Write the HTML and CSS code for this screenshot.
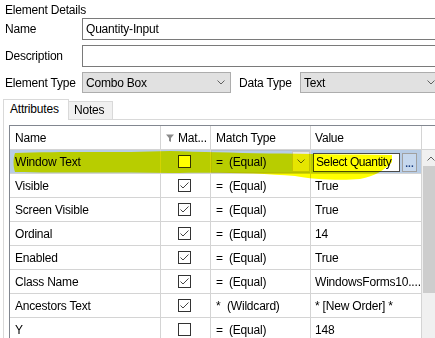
FILE: index.html
```html
<!DOCTYPE html>
<html>
<head>
  <title>Element Details</title>
  <link rel="stylesheet" href="styles.css">
</head>
<body>
  <div class="title">Element Details</div>
  <div class="form">
    <label>Name</label>
    <div class="textbox">Quantity-Input</div>
    <label>Description</label>
    <div class="textbox"></div>
    <label>Element Type</label>
    <div class="type-row">
      <div class="combo combo-type">Combo Box
        <svg width="8" height="5"><path d="M0.5 0.5 L4 4 L7.5 0.5" fill="none" stroke="#606060"/></svg>
      </div>
      <label class="data-label">Data Type</label>
      <div class="combo combo-data">Text
        <svg width="8" height="5"><path d="M0.5 0.5 L4 4 L7.5 0.5" fill="none" stroke="#606060"/></svg>
      </div>
    </div>
  </div>

  <div class="tabs">
    <div class="tab active">Attributes</div>
    <div class="tab notes">Notes</div>
  </div>

  <div class="panel">
    <div class="grid">
      <div class="row head">
        <div class="cell c-name">Name</div>
        <div class="cell c-mat head-mat">
          <svg class="funnel" width="8" height="8"><path d="M0 0.5 H8 L5 4 V8 L3 7 V4 Z" fill="#8a8a8a"/></svg>
          Mat...
        </div>
        <div class="cell c-type">Match Type</div>
        <div class="cell c-val">Value</div>
        <div class="cell c-fill"></div>
      </div>

      <div class="body">
        <div class="rows">
          <div class="row sel">
            <div class="cell c-name">Window Text</div>
            <div class="cell c-mat">
              <svg width="13" height="13"><rect x="0.5" y="0.5" width="12" height="12" fill="#fff" stroke="#333"/></svg>
            </div>
            <div class="cell c-type edit">
              <div class="cell-combo">
                <span class="op">=</span>(Equal)
                <div class="drop">
                  <svg width="8" height="5"><path d="M0.5 0.5 L4 4 L7.5 0.5" fill="none" stroke="#606060"/></svg>
                </div>
              </div>
            </div>
            <div class="cell c-val edit">
              <div class="cell-text">Select Quantity</div>
              <div class="dots">...</div>
            </div>
          </div>

          <div class="row">
            <div class="cell c-name">Visible</div>
            <div class="cell c-mat"><svg width="13" height="13"><rect x="0.5" y="0.5" width="12" height="12" fill="#fff" stroke="#333"/><polyline points="2.5,6.5 5,9 10.5,3.5" fill="none" stroke="#444"/></svg></div>
            <div class="cell c-type"><span class="op">=</span>(Equal)</div>
            <div class="cell c-val">True</div>
          </div>
          <div class="row">
            <div class="cell c-name">Screen Visible</div>
            <div class="cell c-mat"><svg width="13" height="13"><rect x="0.5" y="0.5" width="12" height="12" fill="#fff" stroke="#333"/><polyline points="2.5,6.5 5,9 10.5,3.5" fill="none" stroke="#444"/></svg></div>
            <div class="cell c-type"><span class="op">=</span>(Equal)</div>
            <div class="cell c-val">True</div>
          </div>
          <div class="row">
            <div class="cell c-name">Ordinal</div>
            <div class="cell c-mat"><svg width="13" height="13"><rect x="0.5" y="0.5" width="12" height="12" fill="#fff" stroke="#333"/><polyline points="2.5,6.5 5,9 10.5,3.5" fill="none" stroke="#444"/></svg></div>
            <div class="cell c-type"><span class="op">=</span>(Equal)</div>
            <div class="cell c-val">14</div>
          </div>
          <div class="row">
            <div class="cell c-name">Enabled</div>
            <div class="cell c-mat"><svg width="13" height="13"><rect x="0.5" y="0.5" width="12" height="12" fill="#fff" stroke="#333"/><polyline points="2.5,6.5 5,9 10.5,3.5" fill="none" stroke="#444"/></svg></div>
            <div class="cell c-type"><span class="op">=</span>(Equal)</div>
            <div class="cell c-val">True</div>
          </div>
          <div class="row">
            <div class="cell c-name">Class Name</div>
            <div class="cell c-mat"><svg width="13" height="13"><rect x="0.5" y="0.5" width="12" height="12" fill="#fff" stroke="#333"/><polyline points="2.5,6.5 5,9 10.5,3.5" fill="none" stroke="#444"/></svg></div>
            <div class="cell c-type"><span class="op">=</span>(Equal)</div>
            <div class="cell c-val">WindowsForms10....</div>
          </div>
          <div class="row">
            <div class="cell c-name">Ancestors Text</div>
            <div class="cell c-mat"><svg width="13" height="13"><rect x="0.5" y="0.5" width="12" height="12" fill="#fff" stroke="#333"/><polyline points="2.5,6.5 5,9 10.5,3.5" fill="none" stroke="#444"/></svg></div>
            <div class="cell c-type"><span class="op wild">*</span>(Wildcard)</div>
            <div class="cell c-val">* [New Order] *</div>
          </div>
          <div class="row">
            <div class="cell c-name">Y</div>
            <div class="cell c-mat"><svg width="13" height="13"><rect x="0.5" y="0.5" width="12" height="12" fill="#fff" stroke="#333"/></svg></div>
            <div class="cell c-type"><span class="op">=</span>(Equal)</div>
            <div class="cell c-val">148</div>
          </div>
        </div>

        <div class="scrollbar">
          <div class="scroll-up">
            <svg width="8" height="5"><path d="M0.5 4.5 L4 1 L7.5 4.5" fill="none" stroke="#606060"/></svg>
          </div>
          <div class="thumb"></div>
        </div>
      </div>
    </div>
  </div>

  <!-- highlighter stroke drawn over the selected row -->
  <svg class="marker" width="435" height="338">
    <path d="M15 153 C60 151 120 153 170 151 C230 153 300 154 392 155 L392 162 C385 170 375 176 360 179 C340 181 310 179 295 176 C260 173 220 172 170 173 C120 172 60 173 15 172 C13 166 13 159 15 153 Z" fill="#ffff00"/>
  </svg>
</body>
</html>
```

FILE: styles.css
```css
body {
  margin: 0;
  width: 435px;
  height: 338px;
  overflow: hidden;
  background: #fff;
  color: #000;
  font-family: "Liberation Sans", Arial, sans-serif;
  font-size: 12px;
  letter-spacing: -0.2px;
}
.title {
  padding: 3px 0 0 5px;
  height: 15px;
  line-height: 15px;
}
.form {
  display: grid;
  grid-template-columns: 77px 420px;
  grid-template-rows: 22px 22px 21px;
  row-gap: 5px;
  align-items: center;
  padding-left: 5px;
}
.textbox {
  height: 22px;
  box-sizing: border-box;
  border: 1px solid #7a7a7a;
  padding-left: 3px;
  line-height: 20px;
}
.type-row {
  display: flex;
  align-items: center;
  height: 21px;
}
.combo {
  height: 21px;
  box-sizing: border-box;
  border: 1px solid #adadad;
  background: #e1e1e1;
  padding: 0 5px 0 3px;
  display: flex;
  justify-content: space-between;
  align-items: center;
}
.combo-type {
  width: 149px;
}
.data-label {
  margin-left: 8px;
  width: 61px;
}
.combo-data {
  width: 141px;
}
.tabs {
  display: flex;
  align-items: flex-end;
  height: 20px;
  margin-top: 6px;
  padding-left: 3px;
}
.tab {
  box-sizing: border-box;
  height: 18px;
  border: 1px solid #d9d9d9;
  border-bottom: none;
  background: #f0f0f0;
  padding-left: 5px;
  line-height: 17px;
}
.tab.active {
  width: 66px;
  height: 21px;
  margin-bottom: -1px;
  padding-left: 6px;
  line-height: 18px;
  background: #fff;
  position: relative;
  z-index: 1;
}
.tab.notes {
  width: 45px;
  margin-left: -1px;
}
.panel {
  margin-left: 3px;
  border-left: 1px solid #d9d9d9;
  border-top: 1px solid #d9d9d9;
  padding: 5px 0 0 5px;
}
.grid {
  width: 440px;
  border-left: 1px solid #828790;
  border-top: 1px solid #828790;
}
.row {
  display: flex;
  height: 24px;
  box-sizing: border-box;
  border-bottom: 1px solid #d4d4d4;
}
.cell {
  box-sizing: border-box;
  border-right: 1px solid #d4d4d4;
  display: flex;
  align-items: center;
  white-space: nowrap;
  overflow: hidden;
}
.c-name {
  width: 151px;
  padding-left: 5px;
}
.c-mat {
  width: 50px;
  padding-left: 17px;
}
.head-mat {
  padding-left: 5px;
}
.funnel {
  margin-right: 4px;
}
.c-type {
  width: 100px;
  padding-left: 5px;
}
.c-val {
  width: 111px;
  padding-left: 4px;
}
.c-fill {
  width: 17px;
  border-right: none;
}
.op {
  display: inline-block;
  width: 13px;
}
.op.wild {
  width: 11px;
}
.body {
  display: flex;
}
.rows {
  width: 412px;
}
.row.sel .cell {
  background: #b8cde6;
}
.c-type.edit {
  padding: 0;
}
.cell-combo {
  flex: 1;
  height: 23px;
  box-sizing: border-box;
  border: 1px solid #b4bfcc;
  border-right: none;
  padding-left: 4px;
  display: flex;
  align-items: center;
}
.drop {
  margin-left: auto;
  width: 18px;
  height: 21px;
  box-sizing: border-box;
  border: 1px solid #c4c4c4;
  background: #e6e6e6;
  display: flex;
  align-items: center;
  justify-content: center;
}
.c-val.edit {
  padding-left: 2px;
}
.cell-text {
  width: 87px;
  height: 19px;
  box-sizing: border-box;
  border: 1px solid #4a4a4a;
  background: #fff;
  padding-left: 2px;
  line-height: 17px;
  letter-spacing: -0.4px;
  margin-top: 2px;
}
.dots {
  width: 15px;
  height: 19px;
  margin: 2px 0 0 2px;
  box-sizing: border-box;
  border: 1px solid #a0a0a0;
  background: #c6d8ee;
  color: #1c3f82;
  font-size: 10px;
  font-weight: bold;
  letter-spacing: 0;
  text-align: center;
  line-height: 20px;
}
.scrollbar {
  width: 17px;
  background: #f0f0f0;
}
.scroll-up {
  height: 16px;
  display: flex;
  align-items: center;
  justify-content: center;
}
.thumb {
  width: 15px;
  height: 127px;
  margin-left: 1px;
  background: #cdcdcd;
}
.marker {
  position: absolute;
  left: 0;
  top: 0;
  mix-blend-mode: multiply;
  pointer-events: none;
}
```
